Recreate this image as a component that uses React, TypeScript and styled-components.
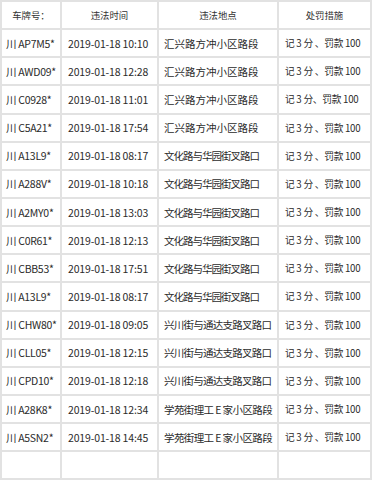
import React from "react";
import styled, { createGlobalStyle } from "styled-components";

const Global = createGlobalStyle`
  html, body { margin: 0; padding: 0; background: #ffffff; }
  body { font-family: "Noto Sans CJK SC", "Noto Sans", sans-serif; }
`;

const Grid = styled.div`
  display: grid;
  grid-template-columns: 58px 95px 118px 91px;
  grid-auto-rows: 26.15px;
  gap: 2px;
  padding: 2px;
  width: 372px;
  box-sizing: border-box;
  background: #e2e2e2;
`;

const HeadCell = styled.div`
  background: #ffffff;
  color: #333333;
  font-size: 9.4px;
  display: flex;
  align-items: center;
  justify-content: center;
  white-space: nowrap;
`;

const Cell = styled.div<{ $pad: number; $ls: number; $size?: number }>`
  background: #ffffff;
  color: #2b2b2b;
  font-size: ${(p) => p.$size ?? 10.5}px;
  letter-spacing: ${(p) => p.$ls}px;
  display: flex;
  align-items: center;
  justify-content: flex-start;
  padding-left: ${(p) => p.$pad}px;
  white-space: pre;
  overflow: hidden;
`;

const EmptyCell = styled.div`
  background: #ffffff;
`;

type Row = { plate: string; time: string; place: string; penalty: string };

const A = "汇兴路方冲小区路段";
const B = "文化路与华园街叉路口";
const C = "兴川街与通达支路叉路口";
const D = "学苑街理工 E 家小区路段";
const P = "记 3 分 、罚款 100";

const rows: Row[] = [
  { plate: "川 AP7M5*", time: "2019-01-18 10:10", place: A, penalty: P },
  { plate: "川 AWD09*", time: "2019-01-18 12:28", place: A, penalty: P },
  { plate: "川 C0928*", time: "2019-01-18 11:01", place: A, penalty: "记 3 分、罚款 100" },
  { plate: "川 C5A21*", time: "2019-01-18 17:54", place: A, penalty: P },
  { plate: "川 A13L9*", time: "2019-01-18 08:17", place: B, penalty: P },
  { plate: "川 A288V*", time: "2019-01-18 10:18", place: B, penalty: P },
  { plate: "川 A2MY0*", time: "2019-01-18 13:03", place: B, penalty: P },
  { plate: "川 C0R61*", time: "2019-01-18 12:13", place: B, penalty: P },
  { plate: "川 CBB53*", time: "2019-01-18 17:51", place: B, penalty: P },
  { plate: "川 A13L9*", time: "2019-01-18 08:17", place: B, penalty: P },
  { plate: "川 CHW80*", time: "2019-01-18 09:05", place: C, penalty: P },
  { plate: "川 CLL05*", time: "2019-01-18 12:15", place: C, penalty: P },
  { plate: "川 CPD10*", time: "2019-01-18 12:18", place: C, penalty: P },
  { plate: "川 A28K8*", time: "2019-01-18 12:34", place: D, penalty: P },
  { plate: "川 A5SN2*", time: "2019-01-18 14:45", place: D, penalty: P },
];

const placeSpacing: Record<string, number> = {
  [A]: 0,
  [B]: -1,
  [C]: -0.75,
  [D]: -0.6,
};

export default function App() {
  return (
    <>
      <Global />
      <Grid>
        {["车牌号：", "违法时间", "违法地点", "处罚措施"].map((h) => (
          <HeadCell key={h}>{h}</HeadCell>
        ))}
        {rows.map((r, i) => (
          <React.Fragment key={i}>
            <Cell $pad={4} $ls={-0.3}>{r.plate}</Cell>
            <Cell $pad={6} $ls={-0.15}>{r.time}</Cell>
            <Cell $pad={5} $ls={placeSpacing[r.place]}>{r.place}</Cell>
            <Cell $pad={6} $ls={-0.25} $size={9.7}>{r.penalty}</Cell>
          </React.Fragment>
        ))}
        {[0, 1, 2, 3].map((j) => (
          <EmptyCell key={`e${j}`} />
        ))}
      </Grid>
    </>
  );
}
